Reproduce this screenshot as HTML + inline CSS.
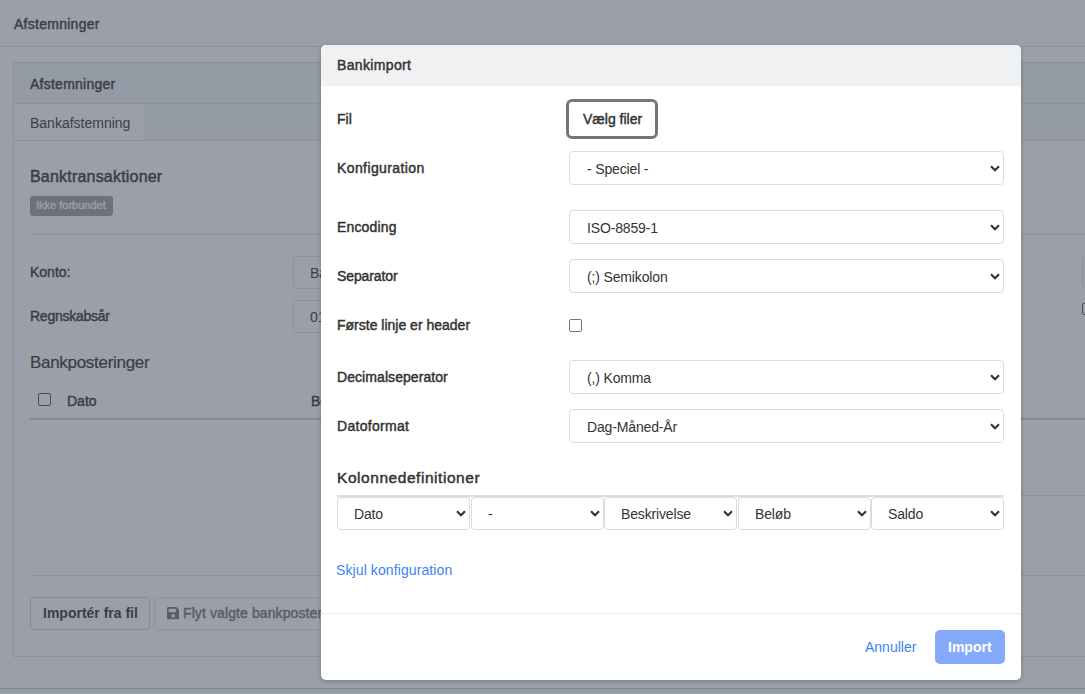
<!DOCTYPE html>
<html><head><meta charset="utf-8">
<style>
html,body{margin:0;padding:0;width:1085px;height:694px;overflow:hidden;background:#fff;font-family:"Liberation Sans",sans-serif;color:#333;}
.a{position:absolute;}
.t{position:absolute;white-space:nowrap;line-height:14px;font-size:14px;color:inherit;}
.b{font-weight:normal;-webkit-text-stroke:0.45px currentColor;}
.ln{position:absolute;height:1px;background:#dee2e6;}
.sel{position:absolute;box-sizing:border-box;border:1px solid #dcdcdc;border-radius:4px;background:#fff;}
.sel span{position:absolute;font-size:14px;line-height:14px;white-space:nowrap;color:#333;letter-spacing:-0.15px;}
</style></head><body>
<div class="a" style="left:0;top:0;width:1085px;height:694px;background:#fff;color:#3a3a3a;">
<div class="t b" style="left:14px;top:17px;letter-spacing:0.27px">Afstemninger</div>
<div class="ln" style="left:0;top:46px;width:1085px;"></div>
<div class="a" style="left:13px;top:62px;width:1100px;height:595px;box-sizing:border-box;border:1px solid #dee2e6;background:#fff;"></div>
<div class="a" style="left:14px;top:63px;width:1090px;height:77px;background:#f3f4f6;"></div>
<div class="ln" style="left:14px;top:103px;width:1090px;"></div>
<div class="t b" style="left:30px;top:77px;letter-spacing:0.25px">Afstemninger</div>
<div class="a" style="left:14px;top:104px;width:131px;height:36px;background:#fff;border-right:1px solid #dee2e6;"></div>
<div class="t" style="left:30px;top:116px;">Bankafstemning</div>
<div class="ln" style="left:14px;top:140px;width:1090px;"></div>
<div class="t b" style="left:30px;top:169px;font-size:16px;line-height:16px;letter-spacing:0.2px">Banktransaktioner</div>
<div class="a" style="left:30px;top:196px;width:83px;height:20px;background:#a0a2a5;border-radius:3px;"></div>
<div class="t" style="left:36px;top:200px;font-size:11px;line-height:11px;color:#fff;-webkit-text-stroke:0.3px #fff;">Ikke forbundet</div>
<div class="ln" style="left:30px;top:234px;width:1060px;"></div>
<div class="t b" style="left:30px;top:265px;">Konto:</div>
<div class="a" style="left:293px;top:255.5px;width:200px;height:33px;box-sizing:border-box;border:1px solid #dee2e6;border-radius:4px;"></div>
<div class="t" style="left:310px;top:266px;">Ba</div>
<div class="t b" style="left:30px;top:309px;letter-spacing:-0.25px">Regnskabsår</div>
<div class="a" style="left:293px;top:299.5px;width:200px;height:33px;box-sizing:border-box;border:1px solid #dee2e6;border-radius:4px;"></div>
<div class="t" style="left:310px;top:310px;">01</div>
<div class="a" style="left:1082px;top:255px;width:200px;height:33px;box-sizing:border-box;border:1px solid #dee2e6;border-radius:4px;"></div>
<div class="a" style="left:1082px;top:303px;width:12px;height:12px;box-sizing:border-box;border:1px solid #555;border-radius:2px;"></div>
<div class="t" style="left:30px;top:354px;font-size:17px;line-height:17px;letter-spacing:-0.3px;-webkit-text-stroke:0.2px currentColor">Bankposteringer</div>
<div class="a" style="left:38px;top:393px;width:13px;height:13px;box-sizing:border-box;border:1px solid #555;border-radius:2px;"></div>
<div class="t b" style="left:67px;top:394px;">Dato</div>
<div class="t b" style="left:311px;top:394px;">Be</div>
<div class="a" style="left:30px;top:418px;width:1060px;height:2px;background:#cfd2d6;"></div>
<div class="ln" style="left:700px;top:495px;width:400px;"></div>
<div class="ln" style="left:30px;top:575px;width:1060px;"></div>
<div class="a" style="left:30px;top:596.5px;width:120px;height:33px;box-sizing:border-box;border:1px solid #d1d5db;border-radius:4px;"></div>
<div class="t" style="left:43px;top:606px;font-weight:bold">Importér fra fil</div>
<div class="a" style="left:153.5px;top:596.5px;width:300px;height:33px;box-sizing:border-box;border:1px solid #e5e7eb;border-radius:4px;"></div>
<svg class="a" style="left:166.5px;top:606px" width="12.4" height="14.17" viewBox="0 0 448 512"><path fill="#777a7f" d="M433.9 129.9l-83.9-83.9A48 48 0 0 0 316.1 32H48C21.5 32 0 53.5 0 80v352c0 26.5 21.5 48 48 48h352c26.5 0 48-21.5 48-48V163.9a48 48 0 0 0-14.1-34zM224 416c-35.3 0-64-28.7-64-64 0-35.3 28.7-64 64-64s64 28.7 64 64c0 35.3-28.7 64-64 64zm96-304.5V212c0 6.6-5.4 12-12 12H76c-6.6 0-12-5.4-12-12V108c0-6.6 5.4-12 12-12h228.5c3.2 0 6.2 1.3 8.5 3.5l3.5 3.5A12 12 0 0 1 320 111.5z"/></svg>
<div class="t b" style="left:183px;top:606px;color:#777a7f;letter-spacing:0.1px">Flyt valgte bankposteringer</div>
<div class="a" style="left:0;top:688px;width:1085px;height:6px;background:#f3f4f6;border-top:1px solid #c9ccd1;"></div>
</div>
<div class="a" style="left:0;top:0;width:1085px;height:694px;background:rgba(55,65,81,0.5);"></div>
<div class="a" style="left:321px;top:45px;width:700px;height:635px;background:#fff;border-radius:5px;overflow:hidden;box-shadow:0 1px 4px rgba(0,0,0,0.25);"><div class="a" style="left:0;top:0;width:700px;height:41px;background:#f0f1f3;"></div></div>
<div class="t b" style="left:337px;top:58px;letter-spacing:0.35px">Bankimport</div>
<div class="t b" style="left:337px;top:112.2px;letter-spacing:0px">Fil</div>
<div class="t b" style="left:337px;top:161.2px;letter-spacing:0.4px">Konfiguration</div>
<div class="t b" style="left:337px;top:220.2px;letter-spacing:0.15px">Encoding</div>
<div class="t b" style="left:337px;top:269.1px;letter-spacing:-0.1px">Separator</div>
<div class="t b" style="left:337px;top:318.1px;letter-spacing:0px">Første linje er header</div>
<div class="t b" style="left:337px;top:370.1px;letter-spacing:0.07px">Decimalseperator</div>
<div class="t b" style="left:337px;top:418.6px;letter-spacing:0.3px">Datoformat</div>
<div class="a" style="left:566px;top:99px;width:92px;height:40px;box-sizing:border-box;border:3px solid #767676;border-radius:6px;background:#fff;"></div>
<div class="t b" style="left:583px;top:112px;">Vælg filer</div>
<div class="sel" style="left:569px;top:151px;width:435px;height:34px;"><span style="left:17px;top:10px">- Speciel -</span><svg width="10" height="8" viewBox="0 0 10 8" style="position:absolute;right:3px;top:13px"><polyline points="1,1.3 5,5.3 9,1.3" fill="none" stroke="#333" stroke-width="2.1"/></svg></div>
<div class="sel" style="left:569px;top:210px;width:435px;height:34px;"><span style="left:17px;top:10px">ISO-8859-1</span><svg width="10" height="8" viewBox="0 0 10 8" style="position:absolute;right:3px;top:13px"><polyline points="1,1.3 5,5.3 9,1.3" fill="none" stroke="#333" stroke-width="2.1"/></svg></div>
<div class="sel" style="left:569px;top:259px;width:435px;height:34px;"><span style="left:17px;top:10px">(;) Semikolon</span><svg width="10" height="8" viewBox="0 0 10 8" style="position:absolute;right:3px;top:13px"><polyline points="1,1.3 5,5.3 9,1.3" fill="none" stroke="#333" stroke-width="2.1"/></svg></div>
<div class="sel" style="left:569px;top:360px;width:435px;height:34px;"><span style="left:17px;top:10px">(,) Komma</span><svg width="10" height="8" viewBox="0 0 10 8" style="position:absolute;right:3px;top:13px"><polyline points="1,1.3 5,5.3 9,1.3" fill="none" stroke="#333" stroke-width="2.1"/></svg></div>
<div class="sel" style="left:569px;top:409px;width:435px;height:34px;"><span style="left:17px;top:10px">Dag-Måned-År</span><svg width="10" height="8" viewBox="0 0 10 8" style="position:absolute;right:3px;top:13px"><polyline points="1,1.3 5,5.3 9,1.3" fill="none" stroke="#333" stroke-width="2.1"/></svg></div>
<div class="a" style="left:569px;top:319px;width:13px;height:13px;box-sizing:border-box;border:1px solid #767676;border-radius:2px;background:#fff;"></div>
<div class="t b" style="left:337px;top:470px;font-size:15.5px;line-height:15px;letter-spacing:0.55px">Kolonnedefinitioner</div>
<div class="a" style="left:337px;top:495px;width:667px;height:2px;background:#dedede;"></div>
<div class="sel" style="left:337px;top:497px;width:133px;height:33px;"><span style="left:16px;top:9px">Dato</span><svg width="10" height="8" viewBox="0 0 10 8" style="position:absolute;right:3px;top:12px"><polyline points="1,1.3 5,5.3 9,1.3" fill="none" stroke="#333" stroke-width="2.1"/></svg></div>
<div class="sel" style="left:471px;top:497px;width:133px;height:33px;"><span style="left:16px;top:9px">-</span><svg width="10" height="8" viewBox="0 0 10 8" style="position:absolute;right:3px;top:12px"><polyline points="1,1.3 5,5.3 9,1.3" fill="none" stroke="#333" stroke-width="2.1"/></svg></div>
<div class="sel" style="left:604px;top:497px;width:133px;height:33px;"><span style="left:16px;top:9px">Beskrivelse</span><svg width="10" height="8" viewBox="0 0 10 8" style="position:absolute;right:3px;top:12px"><polyline points="1,1.3 5,5.3 9,1.3" fill="none" stroke="#333" stroke-width="2.1"/></svg></div>
<div class="sel" style="left:738px;top:497px;width:133px;height:33px;"><span style="left:16px;top:9px">Beløb</span><svg width="10" height="8" viewBox="0 0 10 8" style="position:absolute;right:3px;top:12px"><polyline points="1,1.3 5,5.3 9,1.3" fill="none" stroke="#333" stroke-width="2.1"/></svg></div>
<div class="sel" style="left:871px;top:497px;width:133px;height:33px;"><span style="left:16px;top:9px">Saldo</span><svg width="10" height="8" viewBox="0 0 10 8" style="position:absolute;right:3px;top:12px"><polyline points="1,1.3 5,5.3 9,1.3" fill="none" stroke="#333" stroke-width="2.1"/></svg></div>
<div class="t" style="left:336px;top:563px;color:#3b82f6;letter-spacing:0.1px">Skjul konfiguration</div>
<div class="ln" style="left:321px;top:613px;width:700px;background:#ebebeb;"></div>
<div class="t" style="left:865px;top:640px;color:#3b82f6;">Annuller</div>
<div class="a" style="left:935px;top:630px;width:70px;height:34px;background:#84aaf9;border-radius:5px;"></div>
<div class="t" style="left:948px;top:640px;color:#fff;font-weight:bold">Import</div>
</body></html>
